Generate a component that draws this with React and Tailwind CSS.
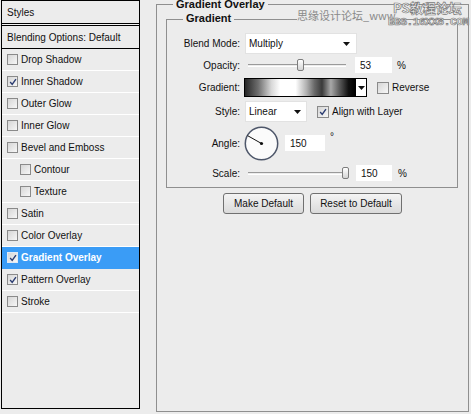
import React from "react";

function Check({ checked, className = "" }) {
  return (
    <span
      className={
        "w-[11px] h-[11px] border border-[#8a8a8a] bg-linear-to-br from-[#d6d6d6] to-[#f7f7f7] flex items-center justify-center shrink-0 " +
        className
      }
    >
      {checked && (
        <svg width="8" height="8" viewBox="0 0 9 9">
          <path d="M1.3 4.6 L3.6 7.2 L7.8 1.2" stroke="#2c3d72" strokeWidth="1.6" fill="none" />
        </svg>
      )}
    </span>
  );
}

function Arrow() {
  return (
    <svg width="7" height="4" viewBox="0 0 7 4" className="shrink-0">
      <path d="M0 0 L7 0 L3.5 4 Z" fill="#111" />
    </svg>
  );
}

function Slider({ pos }) {
  return (
    <div className="relative w-[110px] h-[16px] flex items-center">
      <div className="ml-[3px] w-[98px] h-[3px] border-t border-[#9a9a9a] border-b border-b-white" />
      <div
        className="absolute top-[2px] w-[7px] h-[12px] rounded-[2px] border border-[#7d7d7d] bg-linear-to-b from-white to-[#d4d4d4]"
        style={{ left: pos }}
      />
    </div>
  );
}

const items = [
  { label: "Drop Shadow" },
  { label: "Inner Shadow", checked: true },
  { label: "Outer Glow" },
  { label: "Inner Glow" },
  { label: "Bevel and Emboss" },
  { label: "Contour", indent: true },
  { label: "Texture", indent: true },
  { label: "Satin" },
  { label: "Color Overlay" },
  { label: "Gradient Overlay", checked: true, active: true },
  { label: "Pattern Overlay", checked: true },
  { label: "Stroke" },
];

export default function App() {
  return (
    <div className="relative w-[471px] h-[414px] overflow-hidden bg-[#ececec] flex items-start font-['Liberation_Sans',Arial,sans-serif] text-[10px] text-[#111]">
      {/* Left styles list */}
      <div className="ml-[1px] w-[139px] h-[409px] border border-black flex flex-col bg-[#ececec]">
        <div className="h-[22px] flex items-center pl-[5px] shrink-0">Styles</div>
        <div className="h-px bg-black shrink-0" />
        <div className="h-px bg-[#f4f4f4] shrink-0" />
        <div className="h-px bg-black shrink-0" />
        <div className="h-[23px] flex items-center pl-[5px] border-b border-black shrink-0">
          Blending Options: Default
        </div>
        {items.map((it) => (
          <div
            key={it.label}
            className={
              "h-[22px] flex items-center border-b shrink-0 " +
              (it.indent ? "pl-[18px] " : "pl-[5px] ") +
              (it.active
                ? "bg-[#3a9cf6] text-white font-bold border-[#3a9cf6]"
                : "border-white")
            }
          >
            <Check checked={it.checked} className={it.active ? "border-[#dfe9f5]" : ""} />
            <span className="ml-[3px]">{it.label}</span>
          </div>
        ))}
      </div>

      {/* Right panel */}
      <div className="relative ml-[16px] mt-[4px] w-[313px] h-[408px] border border-[#8f8f8f] flex flex-col">
        <div className="absolute left-[16px] top-[-6px] px-[3px] bg-[#ececec] font-bold text-[11px] leading-[11px]">
          Gradient Overlay
        </div>

        <div className="relative ml-[9px] mt-[14px] w-[292px] h-[169px] border border-[#8f8f8f] pt-[13px] flex flex-col">
          <div className="absolute left-[16px] top-[-7px] px-[3px] bg-[#ececec] font-bold text-[11px] leading-[11px]">
            Gradient
          </div>

          {/* Blend Mode */}
          <div className="flex items-center h-[21px]">
            <span className="w-[73px] text-right">Blend Mode:</span>
            <div className="ml-[5px] w-[112px] h-[21px] bg-white border border-[#e2e2e2] flex items-center justify-between pl-[3px] pr-[6px]">
              <span>Multiply</span>
              <Arrow />
            </div>
          </div>

          {/* Opacity */}
          <div className="flex items-center h-[16px] mt-[3px]">
            <span className="w-[73px] text-right">Opacity:</span>
            <div className="ml-[5px]">
              <Slider pos={52} />
            </div>
            <div className="w-[37px] h-[16px] bg-white flex items-center pl-[5px]">53</div>
            <span className="ml-[5px]">%</span>
          </div>

          {/* Gradient */}
          <div className="flex items-center h-[19px] mt-[5px]">
            <span className="w-[73px] text-right">Gradient:</span>
            <div className="ml-[4px] flex h-[19px] border border-black">
              <div className="w-[110px] h-full bg-[linear-gradient(90deg,#262626_0%,#6e6e6e_12%,#d8d8d8_24%,#ffffff_32%,#ffffff_46%,#b0b0b0_56%,#6a6a6a_63%,#3a3a3a_70%,#a8a8a8_78%,#5a5a5a_86%,#111111_94%,#000000_100%)]" />
              <div className="w-[11px] h-full bg-white border-l border-black flex items-center justify-center">
                <Arrow />
              </div>
            </div>
            <Check className="ml-[10px] w-[12px] h-[12px]" />
            <span className="ml-[3px]">Reverse</span>
          </div>

          {/* Style */}
          <div className="flex items-center h-[21px] mt-[4px]">
            <span className="w-[73px] text-right">Style:</span>
            <div className="ml-[5px] w-[62px] h-[21px] bg-white border border-[#e2e2e2] flex items-center justify-between pl-[3px] pr-[5px]">
              <span>Linear</span>
              <Arrow />
            </div>
            <Check checked className="ml-[10px] w-[12px] h-[12px]" />
            <span className="ml-[3px]">Align with Layer</span>
          </div>

          {/* Angle */}
          <div className="flex items-center h-[34px] mt-[4px]">
            <span className="w-[73px] text-right">Angle:</span>
            <svg width="35" height="35" viewBox="0 0 35 35" className="ml-[4px]">
              <circle cx="17.5" cy="17.5" r="16.2" fill="#fbfbfb" stroke="#4e576a" strokeWidth="1.5" />
              <line x1="17.5" y1="17.5" x2="3.5" y2="9.6" stroke="#111" strokeWidth="1" />
              <circle cx="17.5" cy="17.5" r="1.6" fill="#111" />
            </svg>
            <div className="ml-[6px] w-[40px] h-[16px] bg-white flex items-center pl-[5px]">150</div>
            <span className="ml-[5px] self-start mt-[6px] text-[10px] leading-[10px] text-[#111]">°</span>
          </div>

          {/* Scale */}
          <div className="flex items-center h-[16px] mt-[5px]">
            <span className="w-[73px] text-right">Scale:</span>
            <div className="ml-[5px]">
              <Slider pos={97} />
            </div>
            <div className="ml-px w-[36px] h-[16px] bg-white flex items-center pl-[5px]">150</div>
            <span className="ml-[6px]">%</span>
          </div>
        </div>

        <div className="mt-[5px] flex justify-center gap-[6px]">
          <div className="w-[81px] h-[21px] rounded-[3px] border border-[#707070] bg-linear-to-b from-[#f4f4f4] to-[#dadada] flex items-center justify-center">
            Make Default
          </div>
          <div className="w-[92px] h-[21px] rounded-[3px] border border-[#707070] bg-linear-to-b from-[#f4f4f4] to-[#dadada] flex items-center justify-center">
            Reset to Default
          </div>
        </div>
      </div>

      {/* Watermark */}
      <div className="absolute left-[297px] top-[9px] text-[11px] leading-[12px] text-[#8a8a8a] font-['Noto_Sans_CJK_SC',sans-serif] whitespace-nowrap bg-[#ececec]">
        思缘设计论坛_www.
      </div>
      <div className="absolute left-[393px] top-[0px] text-[13px] leading-[15px] font-bold text-[#f2f2f2] [-webkit-text-stroke:0.7px_#7a7a7a] font-['Noto_Sans_CJK_SC',sans-serif] whitespace-nowrap">
        PS教程论坛
      </div>
      <div className="absolute left-[388px] top-[16px] text-[11px] leading-[12px] font-bold text-[#f2f2f2] [-webkit-text-stroke:0.7px_#7a7a7a] font-['Liberation_Mono',monospace] whitespace-nowrap tracking-[-0.4px]">
        BBS.16XX8.COM
      </div>
    </div>
  );
}
